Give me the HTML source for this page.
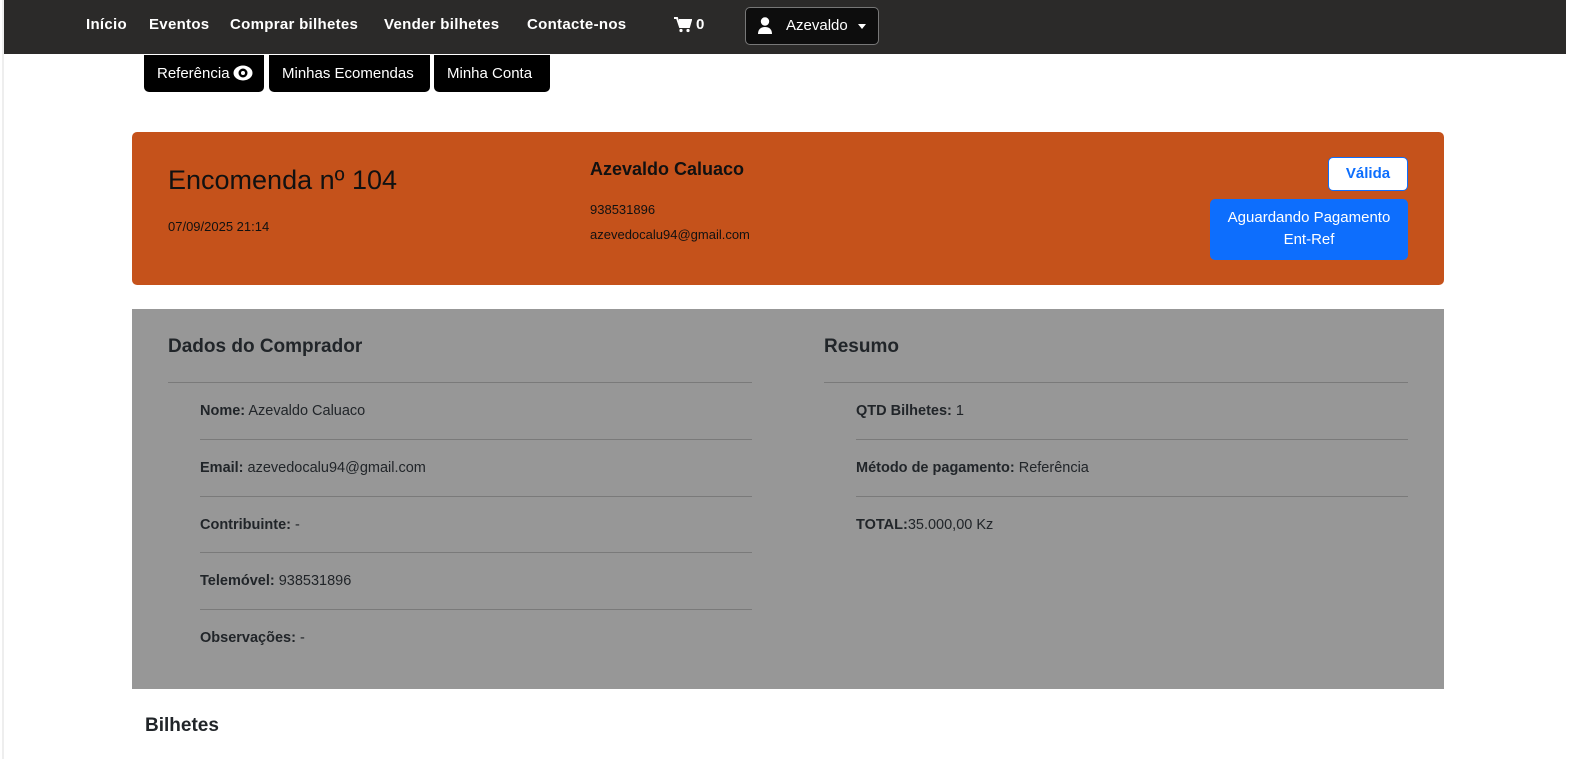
<!DOCTYPE html>
<html><head><meta charset="utf-8"><style>
*{margin:0;padding:0;box-sizing:border-box}
body{width:1578px;height:759px;overflow:hidden;background:#fff;font-family:"Liberation Sans",sans-serif;color:#212529;position:relative}
.a{position:absolute;white-space:nowrap}
.nav{left:4px;top:0;width:1562px;height:54px;background:#2b2a29}
.nl{color:#fff;font-weight:bold;font-size:15px;top:16px;letter-spacing:.3px}
.tab{top:55px;height:37px;background:#000;color:#fff;border-radius:0 0 5px 5px;font-size:15px;line-height:37px;padding:0 13px}
.hr{position:absolute;height:1px;background:#7a7a7a}
.b{font-weight:bold}
.row{font-size:14.5px;color:#212529}
</style></head><body>
<div style="position:absolute;left:2px;top:0;width:2px;height:759px;background:#eee"></div>
<div class="a nav"></div>
<div class="a nl" style="left:86px">Início</div>
<div class="a nl" style="left:149px">Eventos</div>
<div class="a nl" style="left:230px">Comprar bilhetes</div>
<div class="a nl" style="left:384px">Vender bilhetes</div>
<div class="a nl" style="left:527px">Contacte-nos</div>
<svg class="a" style="left:674px;top:17px" width="18" height="16" viewBox="0 0 18 16"><path d="M0 1h3l3 9h9l2-7H5" fill="none" stroke="#fff" stroke-width="2"/><rect x="5" y="3" width="11" height="6" fill="#fff"/><circle cx="7" cy="13.5" r="1.6" fill="#fff"/><circle cx="14" cy="13.5" r="1.6" fill="#fff"/></svg>
<div class="a nl" style="left:696px">0</div>
<div class="a" style="left:745px;top:7px;width:134px;height:38px;border:1px solid #777;border-radius:5px;background:#0d0d0d"></div>
<svg class="a" style="left:758px;top:17px" width="14" height="17" viewBox="0 0 14 17"><circle cx="7" cy="4.5" r="4.2" fill="#fff"/><path d="M0 17c0-5 3-7 7-7s7 2 7 7z" fill="#fff"/></svg>
<div class="a" style="left:786px;top:17px;color:#fff;font-size:15px">Azevaldo</div>
<div class="a" style="left:858px;top:24px;border-left:4px solid transparent;border-right:4px solid transparent;border-top:5px solid #fff"></div>
<div class="a tab" style="left:144px;width:120px;padding:0 0 0 13px">Referência</div>
<svg class="a" style="left:233px;top:64px" width="20" height="18" viewBox="0 0 20 18"><ellipse cx="10" cy="9" rx="9.5" ry="7.5" fill="#fff"/><circle cx="10" cy="9" r="4.5" fill="#000"/><circle cx="10" cy="9" r="2" fill="#fff"/></svg>
<div class="a tab" style="left:269px;width:161px">Minhas Ecomendas</div>
<div class="a tab" style="left:434px;width:116px">Minha Conta</div>
<div class="a" style="left:132px;top:132px;width:1312px;height:153px;background:#c5521b;border-radius:5px"></div>
<div class="a" style="left:168px;top:165px;font-size:27px;color:#111">Encomenda nº 104</div>
<div class="a" style="left:168px;top:219px;font-size:13px;color:#111">07/09/2025 21:14</div>
<div class="a b" style="left:590px;top:159px;font-size:18px;color:#111">Azevaldo Caluaco</div>
<div class="a" style="left:590px;top:202px;font-size:13px;color:#111">938531896</div>
<div class="a" style="left:590px;top:227px;font-size:13px;color:#111">azevedocalu94@gmail.com</div>
<div class="a b" style="left:1328px;top:157px;width:80px;height:34px;background:#fff;border:1px solid #0d6efd;border-radius:5px;color:#0d6efd;font-size:15px;line-height:32px;text-align:center">Válida</div>
<div class="a" style="left:1210px;top:199px;width:198px;height:61px;background:#0d6efd;border-radius:5px;color:#fff;font-size:15px;line-height:22px;text-align:center;padding-top:8px">Aguardando Pagamento<br>Ent-Ref</div>
<div class="a" style="left:132px;top:309px;width:1312px;height:380px;background:#979797"></div>
<div class="a b" style="left:168px;top:336px;font-size:19px">Dados do Comprador</div>
<div class="a b" style="left:824px;top:336px;font-size:19px">Resumo</div>
<div class="hr" style="left:168px;top:382px;width:584px"></div>
<div class="hr" style="left:824px;top:382px;width:584px"></div>
<div class="a row" style="left:200px;top:403px"><b>Nome:</b> Azevaldo Caluaco</div>
<div class="hr" style="left:200px;top:439px;width:552px"></div>
<div class="a row" style="left:200px;top:460px"><b>Email:</b> azevedocalu94@gmail.com</div>
<div class="hr" style="left:200px;top:496px;width:552px"></div>
<div class="a row" style="left:200px;top:517px"><b>Contribuinte:</b> -</div>
<div class="hr" style="left:200px;top:552px;width:552px"></div>
<div class="a row" style="left:200px;top:573px"><b>Telemóvel:</b> 938531896</div>
<div class="hr" style="left:200px;top:609px;width:552px"></div>
<div class="a row" style="left:200px;top:630px"><b>Observações:</b> -</div>
<div class="a row" style="left:856px;top:403px"><b>QTD Bilhetes:</b> 1</div>
<div class="hr" style="left:856px;top:439px;width:552px"></div>
<div class="a row" style="left:856px;top:460px"><b>Método de pagamento:</b> Referência</div>
<div class="hr" style="left:856px;top:496px;width:552px"></div>
<div class="a row" style="left:856px;top:517px"><b>TOTAL:</b>35.000,00 Kz</div>
<div class="a b" style="left:145px;top:715px;font-size:19px">Bilhetes</div>
</body></html>
